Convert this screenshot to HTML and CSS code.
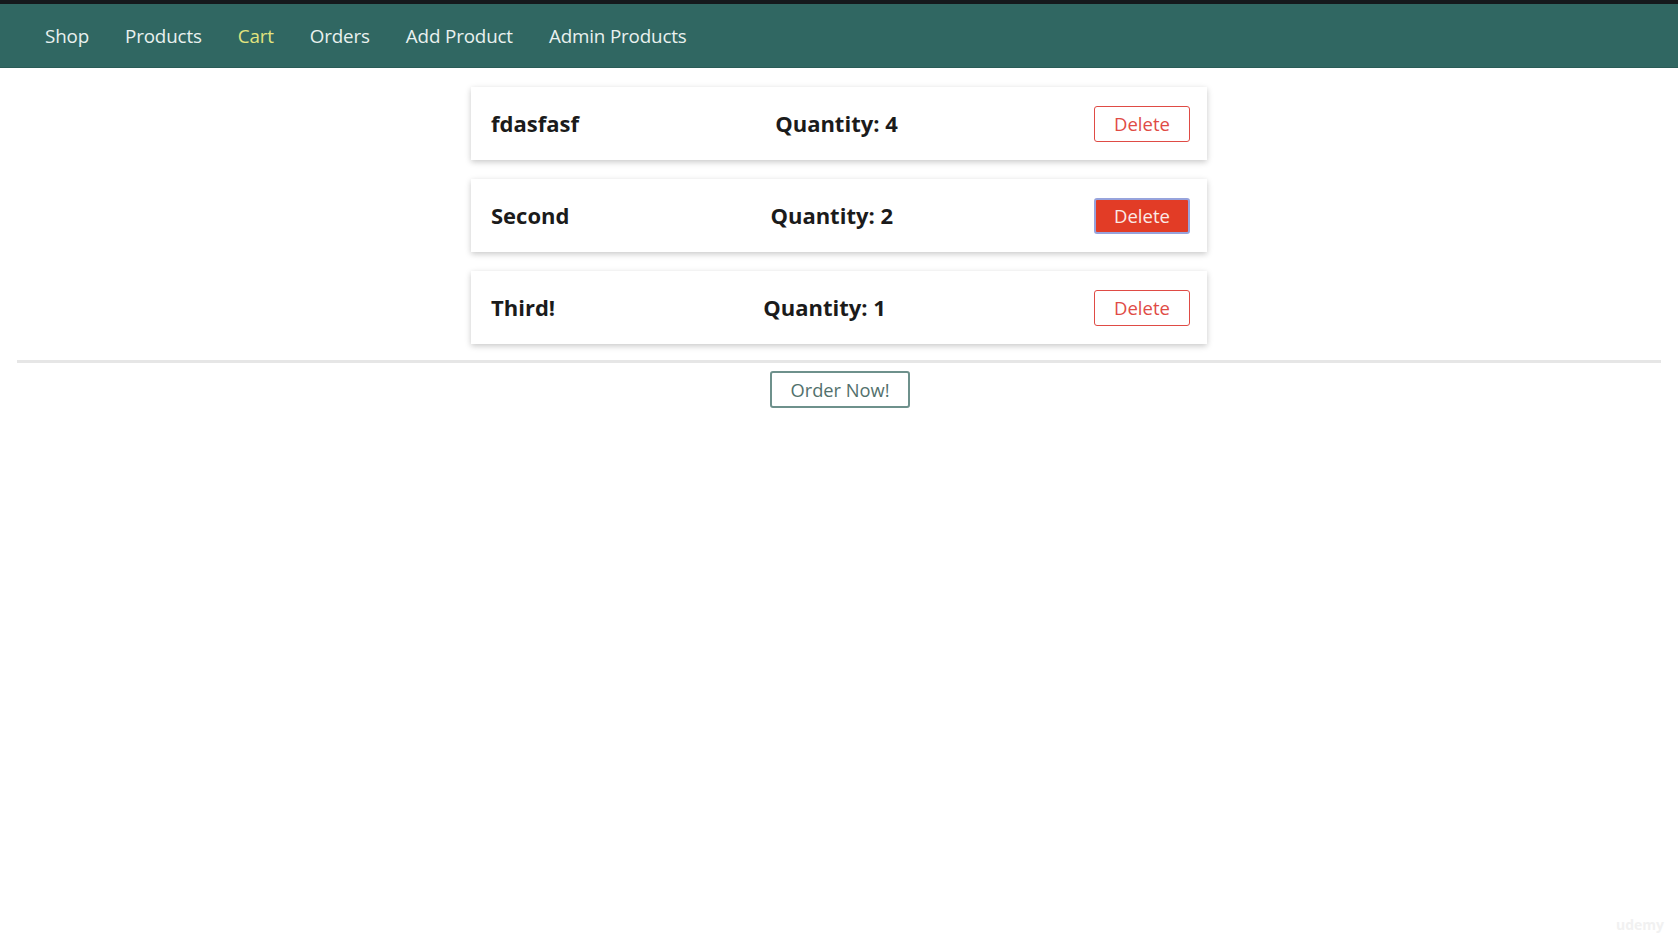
FILE: index.html
```html
<!DOCTYPE html>
<html lang="en">
<head>
<meta charset="utf-8">
<title>Your Cart</title>
<link rel="stylesheet" href="styles.css">
</head>
<body>
<header class="main-header">
  <nav class="main-header__nav">
    <ul class="main-header__item-list">
      <li class="main-header__item"><a href="#">Shop</a></li>
      <li class="main-header__item"><a href="#">Products</a></li>
      <li class="main-header__item"><a class="active" href="#">Cart</a></li>
      <li class="main-header__item"><a href="#">Orders</a></li>
      <li class="main-header__item"><a href="#">Add Product</a></li>
      <li class="main-header__item"><a href="#">Admin Products</a></li>
    </ul>
  </nav>
</header>
<main class="main">
  <ul class="cart__item-list">
    <li class="cart__item">
      <h1 class="cart__title">fdasfasf</h1>
      <h2 class="cart__qty">Quantity: 4</h2>
      <button class="btn danger" type="button">Delete</button>
    </li>
    <li class="cart__item">
      <h1 class="cart__title">Second</h1>
      <h2 class="cart__qty">Quantity: 2</h2>
      <button class="btn danger hovered" type="button">Delete</button>
    </li>
    <li class="cart__item">
      <h1 class="cart__title">Third!</h1>
      <h2 class="cart__qty">Quantity: 1</h2>
      <button class="btn danger" type="button">Delete</button>
    </li>
  </ul>
  <hr class="divider">
  <div class="centered">
    <button class="btn order" type="button">Order Now!</button>
  </div>
</main>
<div class="watermark">udemy</div>
</body>
</html>
```
FILE: styles.css
```css
* { box-sizing: border-box; }

html, body {
  margin: 0;
  padding: 0;
  height: 100%;
  background: #ffffff;
  font-family: "Open Sans", "Noto Sans", sans-serif;
}

body {
  position: relative;
}

.main-header {
  height: 68px;
  border-top: 4px solid #15191c;
  background: #306762;
  border-bottom: 1px solid #2a5c57;
  display: flex;
  align-items: center;
  padding: 1px 0 0 45px;
}

.main-header__item-list {
  list-style: none;
  margin: 0;
  padding: 0;
  display: flex;
  align-items: center;
  gap: 36px;
}

.main-header__item a {
  text-decoration: none;
  color: #e9f1ef;
  font-size: 18.8px;
  letter-spacing: -0.15px;
}

.main-header__item a.active {
  color: #e2e47e;
}

.main {
  padding: 19px 17px 0;
}

.cart__item-list {
  list-style: none;
  margin: 0 auto;
  padding: 0;
  width: 736px;
  display: flex;
  flex-direction: column;
  gap: 19px;
}

.cart__item {
  height: 73px;
  display: flex;
  align-items: center;
  justify-content: space-between;
  padding: 0 17px 0 20px;
  background: #fff;
  box-shadow: 0 2px 6px rgba(0, 0, 0, 0.22);
}

.cart__title,
.cart__qty {
  margin: 0 0 2px;
  font-size: 22px;
  font-weight: 700;
  color: #1b1b1b;
}

.btn {
  font-family: inherit;
  background: #fff;
  cursor: pointer;
  border-radius: 3px;
}

.btn.danger {
  width: 96px;
  height: 36px;
  border: 1px solid #df4b45;
  color: #df4b45;
  font-size: 18.5px;
  padding: 0;
}

.btn.danger.hovered {
  background: #e23c26;
  border: 2px solid #97a3dc;
  color: #fbeae6;
}

.divider {
  margin: 16px 0 8px;
  border: 0;
  height: 3px;
  background: #e6e6e6;
}

.centered {
  display: flex;
  justify-content: center;
}

.btn.order {
  width: 140px;
  height: 37px;
  border: 2px solid #6e918c;
  color: #52706c;
  font-size: 18.3px;
  padding: 0;
  margin-left: 2px;
}

.watermark {
  position: absolute;
  right: 14px;
  bottom: 6px;
  font-size: 14px;
  font-weight: 700;
  color: #f1f1f1;
}
```
